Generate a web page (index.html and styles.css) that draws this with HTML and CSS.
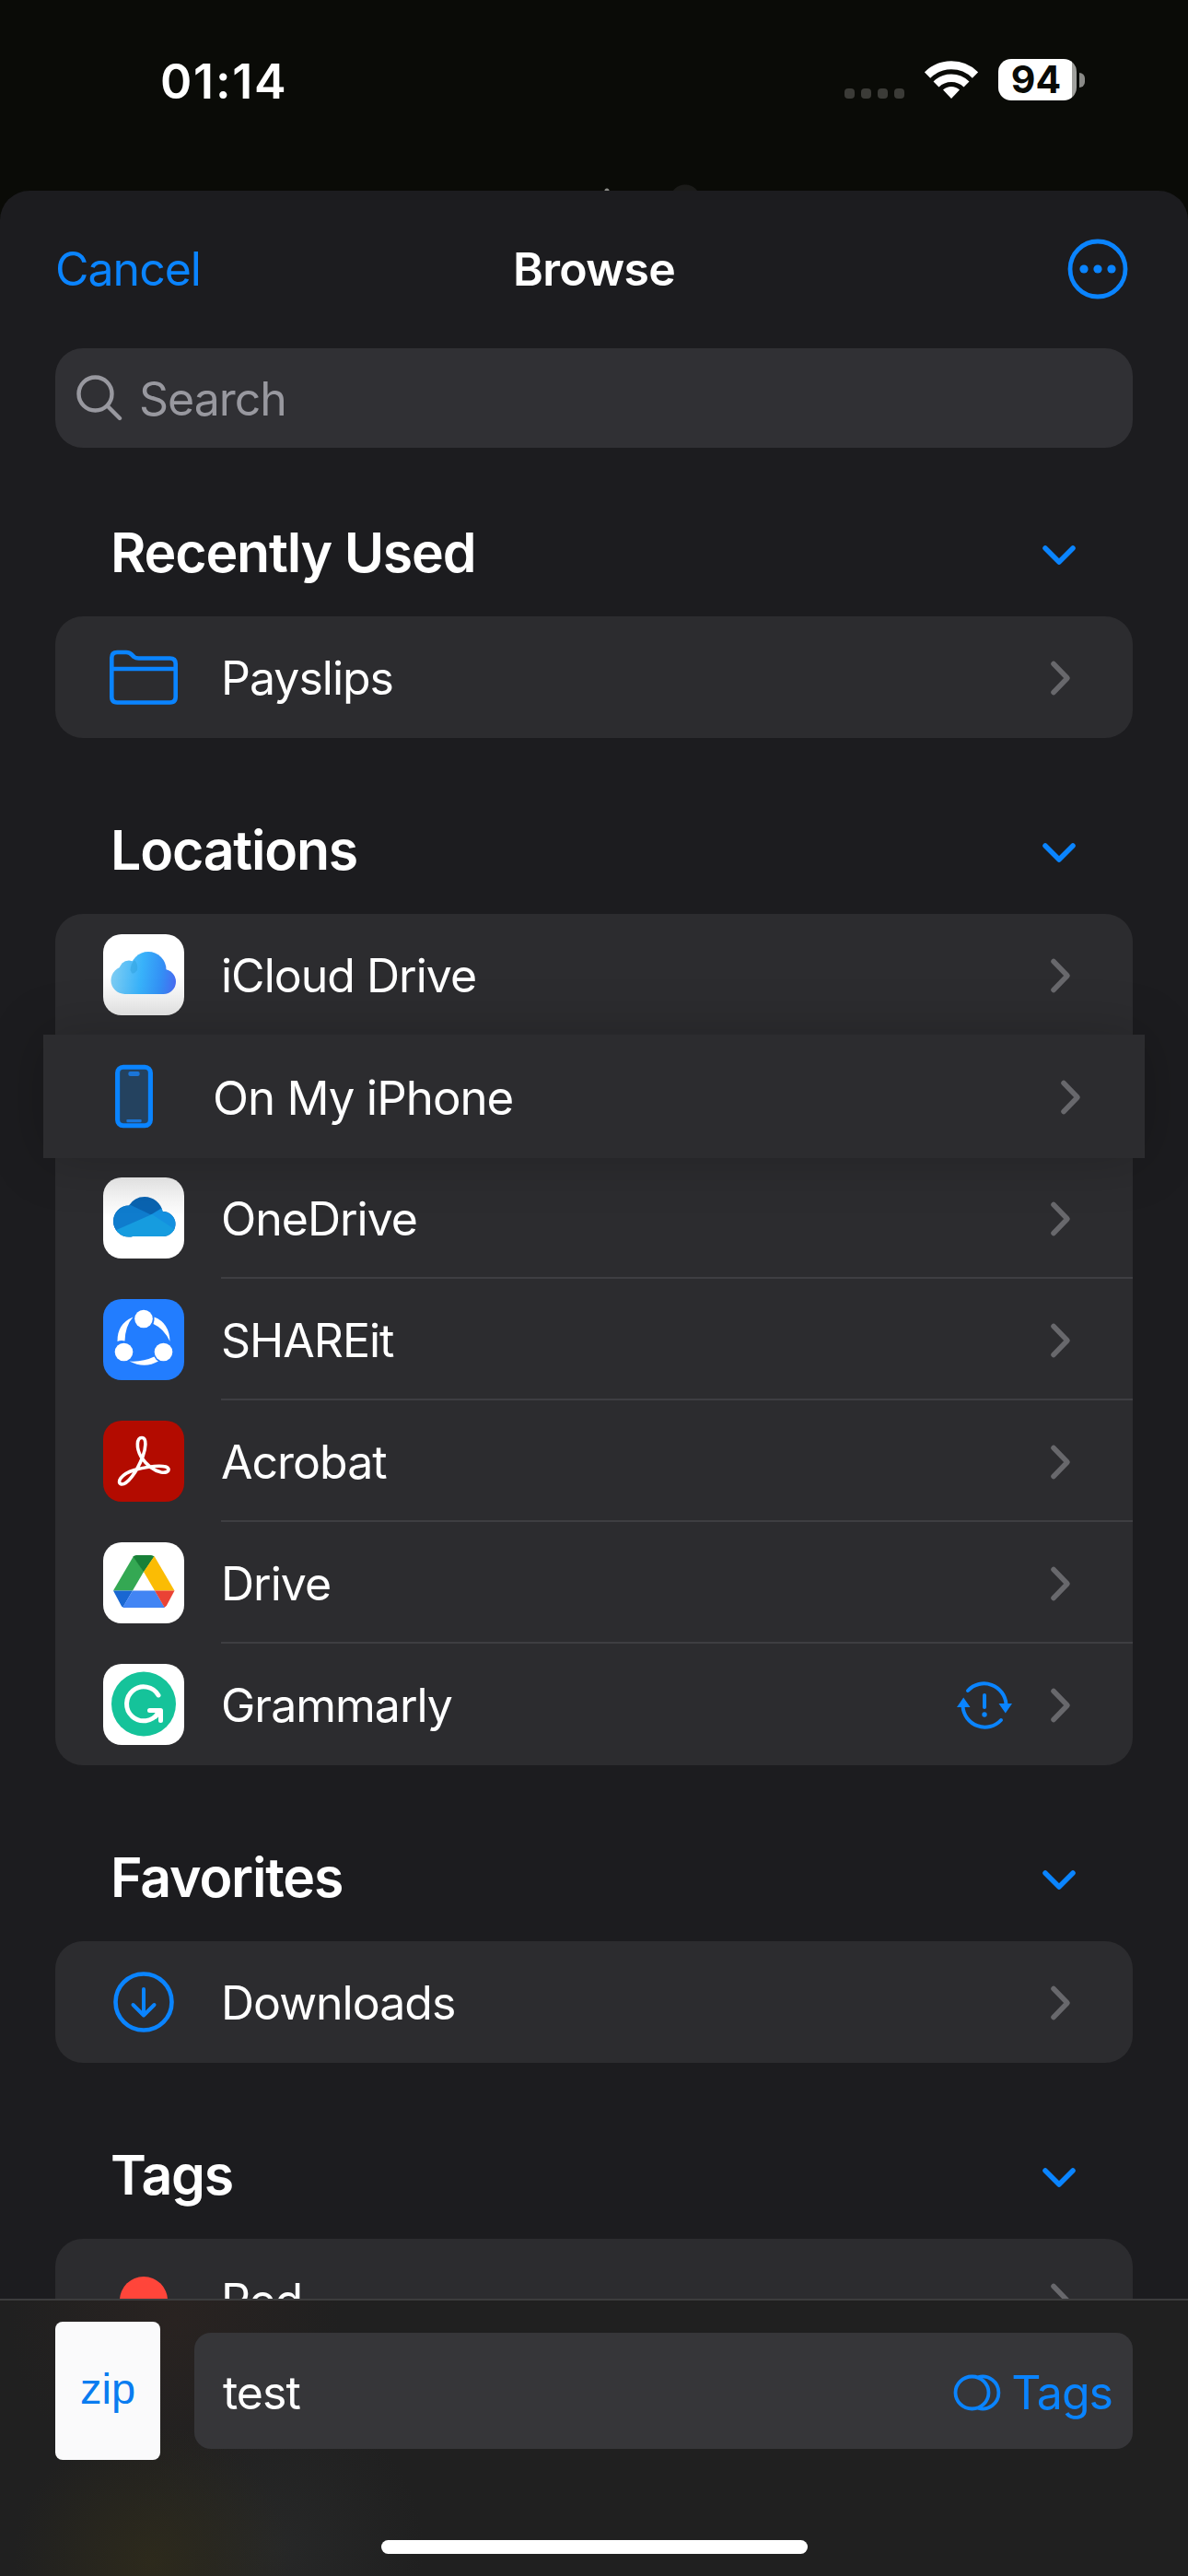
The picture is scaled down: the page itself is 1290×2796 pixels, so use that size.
FILE: index.html
```html
<!DOCTYPE html>
<html lang="en">

<head>
  <meta charset="utf-8">
  <title>Browse</title>
  <link rel="stylesheet" href="styles.css">
</head>

<body>
  <!-- shared icons -->
  <svg class="defs" width="0" height="0">
    <symbol id="right" viewBox="0 0 24 40">
      <path d="M4 4.500L19 20L4 35.500" fill="none" stroke="#68686c" stroke-width="5.500" stroke-linecap="round" stroke-linejoin="round"/>
    </symbol>
    <symbol id="down" viewBox="0 0 40 26">
      <path d="M5 5L20 20L35 5" fill="none" stroke="#0a84ff" stroke-width="5.500" stroke-linecap="round" stroke-linejoin="round"/>
    </symbol>
  </svg>

  <div class="status">
    <div class="time">01:14</div>
    <div class="signal"><i></i><i></i><i></i><i></i></div>
    <svg class="wifi" viewBox="0 0 58 42">
      <g fill="none" stroke="#fff">
        <path d="M3 16.500A37 37 0 0 1 55 16.500" stroke-width="9"/>
        <path d="M12.500 26.500A23.500 23.500 0 0 1 45.500 26.500" stroke-width="8.500"/>
      </g>
      <path d="M29 42L20 32.500A13 13 0 0 1 38 32.500Z" fill="#fff"/>
    </svg>
    <div class="battery">94</div>
    <div class="nub"></div>
  </div>

  <div class="sheet">
    <div class="navbar">
      <a class="cancel">Cancel</a>
      <h1>Browse</h1>
      <svg class="more" viewBox="0 0 66 66">
        <circle cx="33" cy="33" r="30" fill="none" stroke="#0a84ff" stroke-width="4.800"/>
        <g fill="#0a84ff">
          <circle cx="18" cy="33" r="4.600"/>
          <circle cx="33" cy="33" r="4.600"/>
          <circle cx="48" cy="33" r="4.600"/>
        </g>
      </svg>
    </div>

    <div class="search">
      <svg viewBox="0 0 50 50">
        <g fill="none" stroke="#98989f" stroke-width="4.400" stroke-linecap="round">
          <circle cx="20.500" cy="20.500" r="18"/>
          <path d="M34 34L47 47"/>
        </g>
      </svg>
      <span>Search</span>
    </div>

    <div class="head first"><h2>Recently Used</h2><svg><use href="#down"/></svg></div>
    <div class="card">
      <div class="row">
        <svg class="icon" viewBox="0 0 88 88">
          <g fill="none" stroke="#0a84ff" stroke-width="4.600" stroke-linejoin="round">
            <path d="M9.300 23Q9.300 17 15.300 17H25Q28.500 17 31 19.500L33.500 22Q35.500 23.500 38.500 23.500H72.500Q78.700 23.500 78.700 29.500V65.500Q78.700 71.500 72.500 71.500H15.300Q9.300 71.500 9.300 65.500Z"/>
            <path d="M9.300 35H78.700"/>
          </g>
        </svg>
        <div class="body"><span>Payslips</span><svg class="go"><use href="#right"/></svg></div>
      </div>
    </div>

    <div class="head"><h2>Locations</h2><svg><use href="#down"/></svg></div>
    <div class="card">
      <div class="row">
        <svg class="icon" viewBox="0 0 88 88">
          <defs>
            <linearGradient id="paper" x1="0" y1="0" x2="0" y2="1">
              <stop offset="0.500" stop-color="#fff"/>
              <stop offset="1" stop-color="#e9e9e9"/>
            </linearGradient>
            <linearGradient id="sky" gradientUnits="userSpaceOnUse" x1="8" y1="48" x2="80" y2="56">
              <stop offset="0" stop-color="#7fcdf3"/>
              <stop offset="0.450" stop-color="#38b2fa"/>
              <stop offset="0.750" stop-color="#3390f5"/>
              <stop offset="1" stop-color="#4a68f0"/>
            </linearGradient>
          </defs>
          <rect width="88" height="88" rx="20" fill="url(#paper)"/>
          <g fill="url(#sky)">
            <circle cx="28" cy="39" r="10.500"/>
            <circle cx="23.500" cy="50" r="15"/>
            <circle cx="49" cy="38.500" r="19.500"/>
            <circle cx="65.500" cy="51.500" r="13.500"/>
            <rect x="23" y="40" width="43" height="25"/>
          </g>
          <path d="M29.500 39Q30 32 34 28Q38 32 37 39Q33 44 31 42Z" fill="#2e9fdc" opacity="0.500"/>
        </svg>
        <div class="body"><span>iCloud Drive</span><svg class="go"><use href="#right"/></svg></div>
      </div>
      <div class="row lifted">
        <svg class="icon" viewBox="0 0 88 88">
          <rect x="27" y="13" width="35" height="62" rx="6" fill="#24425f" stroke="#0a84ff" stroke-width="5"/>
          <rect x="38.500" y="17.500" width="12" height="5" rx="2" fill="#1a75d8"/>
          <rect x="36.500" y="68.500" width="16" height="3" rx="1" fill="#1a75d8"/>
        </svg>
        <div class="body"><span>On My iPhone</span><svg class="go"><use href="#right"/></svg></div>
      </div>
      <div class="row line">
        <svg class="icon" viewBox="0 0 88 88">
          <defs>
            <linearGradient id="paper2" x1="0" y1="0" x2="0" y2="1">
              <stop offset="0" stop-color="#ebebeb"/>
              <stop offset="0.500" stop-color="#fff"/>
            </linearGradient>
            <clipPath id="cloud">
              <circle cx="45" cy="41" r="20"/>
              <circle cx="28" cy="47.500" r="17"/>
              <circle cx="65" cy="50.500" r="13.500"/>
              <rect x="26" y="44" width="39" height="20"/>
            </clipPath>
          </defs>
          <rect width="88" height="88" rx="20" fill="url(#paper2)"/>
          <g clip-path="url(#cloud)">
            <rect width="88" height="88" fill="#0a63b0"/>
            <path d="M0 20L30 30L53 41L30 64L0 64Z" fill="#0f7ccd"/>
            <path d="M51 41L64 33L88 40V70Z" fill="#1490df"/>
            <path d="M10 59L53 40L80 58V70H10Z" fill="#169cdf"/>
          </g>
        </svg>
        <div class="body"><span>OneDrive</span><svg class="go"><use href="#right"/></svg></div>
      </div>
      <div class="row line">
        <svg class="icon" viewBox="0 0 88 88">
          <rect width="88" height="88" rx="20" fill="#227dff"/>
          <g fill="#fff">
            <circle cx="44" cy="21.500" r="9.800"/>
            <circle cx="22.500" cy="57.500" r="9.800"/>
            <circle cx="65.500" cy="57.500" r="9.800"/>
            <path d="M15.500 46Q15 27 32.500 19.500Q24 29 23.500 45.500Q19 44.500 15.500 46Z"/>
            <path d="M55.500 19.500Q72 26 72.500 46Q66 32 54.500 27Q56 23 55.500 19.500Z"/>
            <path d="M28.500 67.500Q43 68.500 55.500 62.500Q57 66 60 67.500Q45 76 28.500 67.500Z"/>
          </g>
        </svg>
        <div class="body"><span>SHAREit</span><svg class="go"><use href="#right"/></svg></div>
      </div>
      <div class="row line">
        <svg class="icon" viewBox="0 0 88 88">
          <rect width="88" height="88" rx="20" fill="#b30b00"/>
          <path d="M41 39C36 30 36 18.500 42 18.500C48 18.500 46 31 43 39C36 57 26 69.500 20 69C14 67.500 19 58 34 53.500C48 50 60 48 68 50C74 52.500 71 57 63 56C54 54 47 48 41 39Z" fill="none" stroke="#fff" stroke-width="3.600" stroke-linejoin="round"/>
        </svg>
        <div class="body"><span>Acrobat</span><svg class="go"><use href="#right"/></svg></div>
      </div>
      <div class="row line">
        <svg class="icon" viewBox="0 0 88 88">
          <rect width="88" height="88" rx="20" fill="#fff"/>
          <path d="M33 15L44 32L32 52.500H11Z" fill="#34a853"/>
          <path d="M32.500 15.500Q34 14 36 14H52Q54 14 55.500 15.500L44 32.500Z" fill="#188038"/>
          <path d="M55.500 15L77.500 52.500H56L44 32Z" fill="#fbbc04"/>
          <path d="M11 52.500H32L21.500 70.500Q20 70 19.500 68.500Z" fill="#1967d2"/>
          <path d="M32 52.500H56L67 71H24Q22 71 21.300 70.500Z" fill="#4285f4"/>
          <path d="M56 52.500H77.500L69 68.500Q68 70 66.500 70.500Z" fill="#ea4335"/>
        </svg>
        <div class="body"><span>Drive</span><svg class="go"><use href="#right"/></svg></div>
      </div>
      <div class="row">
        <svg class="icon" viewBox="0 0 88 88">
          <rect width="88" height="88" rx="20" fill="#fff"/>
          <circle cx="44" cy="43.500" r="35" fill="#15c39a"/>
          <g fill="none" stroke="#fff" stroke-width="5" stroke-linecap="round">
            <path d="M60 34A18.500 18.500 0 1 0 59.500 53.500"/>
            <path d="M50.500 50.500H62.500V61.500M62 51L57 57" stroke-linejoin="round"/>
          </g>
        </svg>
        <div class="body">
          <span>Grammarly</span>
          <svg class="sync" viewBox="0 0 60 54">
            <g fill="none" stroke="#0a84ff" stroke-width="4" stroke-linecap="round">
              <path d="M12 11A24 24 0 0 1 53.500 26"/>
              <path d="M48 43A24 24 0 0 1 6.500 28"/>
              <path d="M30 16V29"/>
            </g>
            <g fill="#0a84ff">
              <circle cx="30" cy="37" r="2.700"/>
              <path d="M45.500 25H60L52.800 35.500ZM0 29H14.500L7.200 18.500Z"/>
            </g>
          </svg>
          <svg class="go"><use href="#right"/></svg>
        </div>
      </div>
    </div>

    <div class="head"><h2>Favorites</h2><svg><use href="#down"/></svg></div>
    <div class="card">
      <div class="row">
        <svg class="icon" viewBox="0 0 88 88">
          <g fill="none" stroke="#0a84ff" stroke-width="4.600" stroke-linecap="round" stroke-linejoin="round">
            <circle cx="44" cy="44" r="30.500"/>
            <path d="M44 30V58M32.500 47L44 58.500L55.500 47" stroke-width="4"/>
          </g>
        </svg>
        <div class="body"><span>Downloads</span><svg class="go"><use href="#right"/></svg></div>
      </div>
    </div>

    <div class="head"><h2>Tags</h2><svg><use href="#down"/></svg></div>
    <div class="card">
      <div class="row">
        <svg class="icon" viewBox="0 0 88 88"><circle cx="44" cy="45" r="26" fill="#ff453a"/></svg>
        <div class="body"><span>Red</span><svg class="go"><use href="#right"/></svg></div>
      </div>
    </div>
  </div>

  <div class="bottom">
    <div class="save">
      <div class="file">zip</div>
      <div class="field">
        <span>test</span>
        <a class="tags">
          <svg viewBox="0 0 54 40">
            <g fill="none" stroke="#0a84ff" stroke-width="3.800">
              <ellipse cx="20.500" cy="20" rx="18" ry="17.500"/>
              <path d="M27 3.200A17.500 17.500 0 1 1 27 36.800"/>
            </g>
          </svg>
          Tags
        </a>
      </div>
    </div>
    <div class="home"></div>
  </div>
</body>

</html>
```

FILE: styles.css
```css
* {
  box-sizing: border-box;
}

body {
  margin: 0;
  width: 1290px;
  height: 2796px;
  display: flex;
  flex-direction: column;
  overflow: hidden;
  background: #0a0b07;
  color: #fff;
  font-family: Inter, "Liberation Sans", sans-serif;
  font-size: 50px;
  letter-spacing: -1px;
}

svg {
  display: block;
  flex: none;
}

.defs {
  position: absolute;
}

/* status bar */
.status {
  height: 207px;
  flex: none;
  display: flex;
  align-items: flex-start;
  padding: 64px 112px 0 174px;
  background:
    radial-gradient(circle 3px at 659px 207px, #8a8a86 2px, transparent 3px),
    radial-gradient(circle 17px at 744px 217px, #1b1b19 16px, transparent 17px);
}

.time {
  margin-right: auto;
  line-height: 50px;
  font-size: 52px;
  font-weight: 600;
  letter-spacing: 1.8px;
}

.signal {
  display: flex;
  gap: 7px;
  margin: 32px 22px 0 0;
}

.signal i {
  width: 11px;
  height: 11px;
  border-radius: 4px;
  background: #3b3b37;
}

.wifi {
  width: 58px;
  height: 42px;
  margin: 1px 22px 0 0;
}

.battery {
  width: 85px;
  height: 45px;
  padding-right: 3px;
  border-radius: 14px;
  background: linear-gradient(to right, #fff 80px, #a0a09d 80px);
  color: #0a0b07;
  font-size: 41px;
  font-weight: 700;
  line-height: 45px;
  letter-spacing: 0;
  text-align: center;
}

.nub {
  width: 6px;
  height: 16px;
  margin: 15px 0 0 3px;
  border-radius: 0 6px 6px 0;
  background: #8a8a87;
}

/* sheet */
.sheet {
  flex: 1;
  min-height: 0;
  overflow: hidden;
  padding: 0 60px;
  border-radius: 32px 32px 0 0;
  background: #1c1c1f;
}

.navbar {
  height: 171px;
  display: grid;
  grid-template-columns: 1fr auto 1fr;
  align-items: center;
  padding-bottom: 2px;
}

.navbar h1 {
  margin: 0;
  font-size: 50px;
  font-weight: 600;
  letter-spacing: -0.7px;
}

.cancel,
.tags {
  color: #0a84ff;
}

.more {
  width: 66px;
  height: 66px;
  justify-self: end;
  margin-right: 5px;
}

.search {
  height: 108px;
  display: flex;
  align-items: center;
  gap: 18px;
  padding-left: 23px;
  border-radius: 30px;
  background: #303034;
  color: #98989f;
}

.search svg {
  width: 50px;
  height: 50px;
}

.search span {
  padding-top: 2px;
}

.head {
  height: 191px;
  display: flex;
  align-items: center;
  justify-content: space-between;
  padding: 51px 60px 0;
}

.head.first {
  height: 183px;
  padding-top: 43px;
}

.head h2 {
  margin: 0;
  font-size: 59px;
  font-weight: 600;
  letter-spacing: -1.2px;
}

.head svg {
  width: 40px;
  height: 26px;
  margin-top: 8px;
}

.card {
  border-radius: 30px;
  background: #2c2c2f;
}

.row {
  height: 132px;
  display: flex;
  align-items: center;
  gap: 40px;
  padding-left: 52px;
}

.icon {
  width: 88px;
  height: 88px;
}

.body {
  flex: 1;
  height: 100%;
  display: flex;
  align-items: center;
  padding: 4px 66px 0 0;
  border-bottom: 2px solid transparent;
}

.line .body {
  border-color: #3e3e42;
}

.body span {
  margin-right: auto;
}

.go {
  width: 24px;
  height: 40px;
}

.sync {
  width: 60px;
  height: 54px;
  margin-right: 41px;
}

/* row picked up by a long press */
.lifted {
  position: relative;
  height: 134px;
  margin: -1px -13px;
  padding-left: 53px;
  gap: 41px;
  background: #2c2c2f;
  box-shadow: 0 0 60px rgba(0, 0, 0, 0.22);
  font-size: 51px;
}

.lifted .icon {
  width: 90px;
  height: 90px;
}

.lifted .body {
  padding-right: 68px;
}

/* bottom bar */
.bottom {
  height: 301px;
  flex: none;
  padding: 23px 60px 0;
  border-top: 2px solid #3c3c3d;
  background:
    radial-gradient(circle 150px at 165px 285px, #2d2a1c, transparent),
    radial-gradient(circle 180px at 190px 20px, #292321, transparent),
    radial-gradient(circle 160px at 300px 270px, #272828, transparent),
    #202020;
}

.save {
  display: flex;
  align-items: center;
  gap: 37px;
}

.file {
  width: 114px;
  height: 150px;
  border-radius: 8px;
  background: #fafafb;
  color: #0a7cf0;
  font-family: "Liberation Sans", sans-serif;
  font-size: 47px;
  line-height: 146px;
  letter-spacing: 0;
  text-align: center;
}

.field {
  flex: 1;
  height: 126px;
  display: flex;
  align-items: center;
  justify-content: space-between;
  padding: 3px 22px 0 31px;
  border-radius: 18px;
  background: #363639;
}

.tags {
  display: flex;
  align-items: center;
  gap: 9px;
}

.tags svg {
  width: 54px;
  height: 40px;
}

.home {
  width: 463px;
  height: 15px;
  margin: 87px auto 0;
  border-radius: 8px;
  background: #fff;
}
```
